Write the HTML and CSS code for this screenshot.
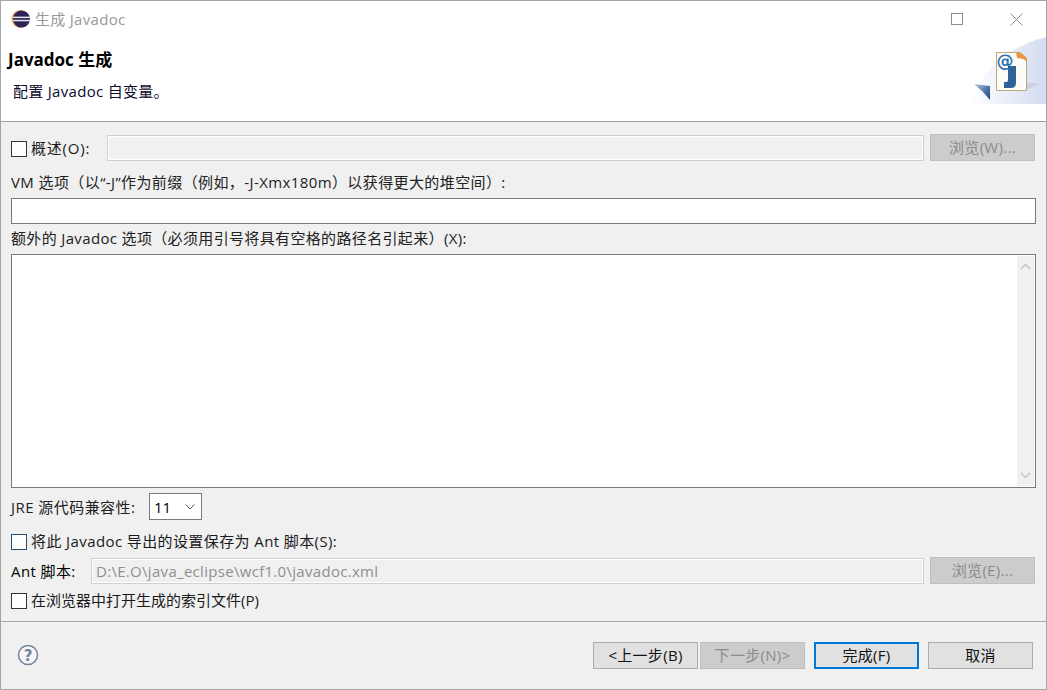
FILE: index.html
```html
<!DOCTYPE html>
<html lang="zh">
<head>
<meta charset="utf-8">
<title>生成 Javadoc</title>
<link rel="stylesheet" href="styles.css">
</head>
<body>
<div class="window">
  <div class="titlebar">
    <svg class="app-icon" width="20" height="20" viewBox="0 0 20 20">
      <circle cx="9.5" cy="10" r="9" fill="#e9a75a"/>
      <circle cx="10.5" cy="10" r="8.6" fill="#2c2255"/>
      <rect x="2" y="7.6" width="17.5" height="1.5" fill="#e6e4ee"/>
      <rect x="2" y="10.8" width="17.5" height="1.5" fill="#e6e4ee"/>
    </svg>
    <span class="title-text">生成 Javadoc</span>
    <div class="win-controls">
      <svg width="12" height="12" viewBox="0 0 12 12"><rect x="0.5" y="0.5" width="11" height="11" fill="none" stroke="#8c8c8c"/></svg>
      <svg width="13" height="13" viewBox="0 0 13 13"><path d="M0.5 0.5L12.5 12.5M12.5 0.5L0.5 12.5" stroke="#8c8c8c" fill="none"/></svg>
    </div>
  </div>
  <header class="banner">
    <div class="banner-text">
      <h1 class="banner-title">Javadoc 生成</h1>
      <p class="banner-desc">配置 Javadoc 自变量。</p>
    </div>
    <svg class="banner-art" width="76" height="68" viewBox="0 0 76 68">
      <defs>
        <linearGradient id="swoosh" x1="0" y1="0" x2="1" y2="0">
          <stop offset="0" stop-color="#ffffff"/>
          <stop offset="1" stop-color="#d3dcf1"/>
        </linearGradient>
        <linearGradient id="tri" x1="0" y1="0" x2="1" y2="1">
          <stop offset="0" stop-color="#b9cbe2"/>
          <stop offset="0.6" stop-color="#4a6fa5"/>
          <stop offset="1" stop-color="#1f3f78"/>
        </linearGradient>
      </defs>
      <path d="M0 67C6 40 35 10 76 0V67Z" fill="url(#swoosh)"/>
      <path d="M56 45L71 47L56 53Z" fill="#ccd0e4"/>
      <path d="M26.500 15.500H50L56.500 21V53.500H26.500Z" fill="#fdfcf6" stroke="#b8aa7c"/>
      <path d="M46 15Q56 16 57 25Q54 21 47 21Z" fill="#e9963e"/>
      <text class="art-at" x="26.500" y="29.500">@</text>
      <path d="M38 29H46V46Q46 51 41 51H34V45H36.500Q38 45 38 43Z" fill="#2f6299"/>
      <path d="M4 47L20 49L20 63Q13 54 4 47Z" fill="url(#tri)"/>
    </svg>
  </header>
  <main class="content">
    <div class="row row-overview">
      <label class="check"><span class="box"></span><span class="wide-1">概述(O):</span></label>
      <div class="field disabled grow"></div>
      <div class="btn btn-disabled btn-browse">浏览(W)...</div>
    </div>
    <div class="caption cap-vm">VM 选项（以“-J”作为前缀（例如，-J-Xmx180m）以获得更大的堆空间）:</div>
    <div class="field input-full"></div>
    <div class="caption cap-extra">额外的 Javadoc 选项（必须用引号将具有空格的路径名引起来）(X):</div>
    <div class="field textarea">
      <div class="scrollbar">
        <svg width="11" height="7" viewBox="0 0 11 7"><path d="M1 6L5.500 1.500L10 6" fill="none" stroke="#c4c4c4" stroke-width="1.500"/></svg>
        <svg width="11" height="7" viewBox="0 0 11 7"><path d="M1 1L5.500 5.500L10 1" fill="none" stroke="#c4c4c4" stroke-width="1.500"/></svg>
      </div>
    </div>
    <div class="row row-jre">
      <span class="jre-label">JRE 源代码兼容性:</span>
      <div class="select"><span>11</span><svg width="10" height="6" viewBox="0 0 10 6"><path d="M0.500 0.500L5 5L9.500 0.500" fill="none" stroke="#555"/></svg></div>
    </div>
    <label class="check check-ant"><span class="box box-focus"></span>将此 Javadoc 导出的设置保存为 Ant 脚本(S):</label>
    <div class="row row-ant">
      <span class="ant-label">Ant 脚本:</span>
      <div class="field disabled grow path">D:\E.O\java_eclipse\wcf1.0\javadoc.xml</div>
      <div class="btn btn-disabled btn-browse">浏览(E)...</div>
    </div>
    <label class="check check-open"><span class="box"></span>在浏览器中打开生成的索引文件(P)</label>
  </main>
  <footer class="footer">
    <svg class="help" width="22" height="22" viewBox="0 0 22 22">
      <circle cx="11" cy="11" r="9.500" fill="#f5f6f8" stroke="#75829a" stroke-width="1.500"/>
      <text class="help-mark" x="11" y="16.500">?</text>
    </svg>
    <div class="actions">
      <div class="nav-pair">
        <div class="btn btn-foot">&lt;上一步(B)</div>
        <div class="btn btn-disabled btn-foot">下一步(N)&gt;</div>
      </div>
      <div class="btn btn-foot btn-default">完成(F)</div>
      <div class="btn btn-foot">取消</div>
    </div>
  </footer>
</div>
</body>
</html>
```
FILE: styles.css
```css
* { box-sizing: border-box; }
html, body { margin: 0; padding: 0; }
body {
  width: 1047px;
  height: 690px;
  overflow: hidden;
  font-family: "Open Sans", "Noto Sans CJK SC", sans-serif;
  font-size: 15px;
  color: #000;
}
.window {
  width: 1047px;
  height: 690px;
  display: flex;
  flex-direction: column;
  background: #f0f0f0;
  border: 1px solid #a6a6a6;
}
.titlebar {
  height: 36px;
  flex: none;
  background: #fff;
  display: flex;
  align-items: center;
  padding-left: 10px;
}
.app-icon { margin-right: 4px; }
.title-text { color: #999; font-size: 15px; letter-spacing: 0.3px; padding-bottom: 2px; }
.win-controls {
  margin-left: auto;
  display: flex;
  align-items: center;
  gap: 47px;
  padding-right: 23px;
}
.banner {
  height: 85px;
  flex: none;
  background: #fff;
  border-bottom: 1px solid #a0a0a0;
  display: flex;
  justify-content: space-between;
  align-items: flex-start;
}
.banner-title { margin: 0; padding: 13px 0 0 7px; font-size: 17px; font-weight: 700; line-height: 20px; }
.banner-desc { margin: 0; padding: 11px 0 0 12px; font-size: 15px; line-height: 20px; color: #0a0a2a; letter-spacing: 0.3px; }
.banner-art { flex: none; }
.art-at { font-family: "DejaVu Sans", sans-serif; font-size: 17px; font-weight: 700; fill: #2f72b5; }
.content {
  flex: 1;
  padding: 12px 10px 10px;
  border-bottom: 1px solid #a9a9a9;
  display: flex;
  flex-direction: column;
}
.row { display: flex; align-items: center; }
.grow { flex: 1; }
.check { display: flex; align-items: flex-start; gap: 4px; height: 20px; line-height: 18px; color: #1a1a1a; }
.box { width: 16px; height: 16px; margin-top: 2px; background: #fff; border: 1px solid #333; flex: none; }
.box-focus { border-color: #1e4f78; }
.field { background: #fff; border: 1px solid #7a7a7a; }
.field.disabled { background: #f0f0f0; border: 1px solid #cfcfcf; box-shadow: inset 0 0 0 1px #fff; height: 26px; }
.row-overview { height: 27px; }
.row-overview .check { width: 96px; margin-top: 2px; }
.wide-1 { letter-spacing: 0.8px; }
.row-overview .field { margin-right: 6px; }
.btn {
  display: flex;
  align-items: center;
  justify-content: center;
  height: 27px;
  padding-bottom: 2px;
  background: #e1e1e1;
  border: 1px solid #adadad;
  color: #111;
  letter-spacing: 0.3px;
}
.btn-disabled { background: #cccccc; border-color: #bfbfbf; color: #8b8b8b; }
.btn-browse { width: 105px; flex: none; margin-right: 1px; }
.caption { height: 20px; line-height: 18px; color: #222; letter-spacing: 0.4px; }
.cap-vm { margin-top: 12px; }
.input-full { height: 26px; margin-top: 5px; }
.cap-extra { margin-top: 5px; letter-spacing: 0.35px; }
.textarea { height: 234px; margin-top: 5px; display: flex; justify-content: flex-end; }
.scrollbar {
  width: 17px;
  margin: 1px;
  background: #f0f0f0;
  display: flex;
  flex-direction: column;
  justify-content: space-between;
  align-items: center;
  padding: 7px 0;
}
.row-jre { margin-top: 5px; height: 27px; }
.jre-label { width: 138px; color: #222; letter-spacing: 0.45px; }
.select {
  width: 53px;
  height: 27px;
  background: #fff;
  border: 1px solid #7a7a7a;
  display: flex;
  align-items: center;
  justify-content: space-between;
  padding: 0 6px 0 4px;
}
.check-ant { margin-top: 12px; letter-spacing: 0.4px; }
.row-ant { margin-top: 5px; height: 27px; }
.ant-label { width: 80px; letter-spacing: 0.4px; }
.path { color: #8f8f8f; padding-left: 4px; display: flex; align-items: center; margin-right: 6px; letter-spacing: 0.3px; }
.check-open { margin-top: 7px; }
.footer {
  height: 68px;
  flex: none;
  display: flex;
  align-items: flex-start;
  padding: 20px 13px 0 16px;
}
.help { margin-top: 2px; }
.help-mark { font-family: "DejaVu Sans", sans-serif; font-size: 15px; font-weight: 700; fill: #75829a; text-anchor: middle; }
.actions { margin-left: auto; display: flex; gap: 9px; }
.nav-pair { display: flex; gap: 2px; }
.btn-foot { width: 105px; }
.btn-default { border: 2px solid #0078d7; }
```
